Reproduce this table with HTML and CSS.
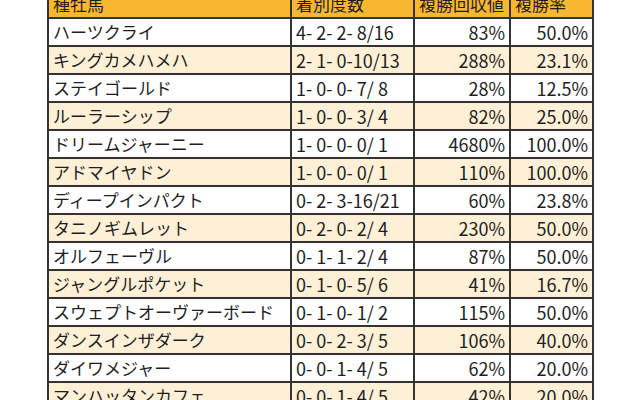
FILE: index.html
```html
<!DOCTYPE html>
<html lang="ja">
<head>
<meta charset="utf-8">
<link rel="stylesheet" href="styles.css">
</head>
<body>
<table class="stats">
  <colgroup>
    <col class="c-name"><col class="c-rec"><col class="c-ret"><col class="c-rate">
  </colgroup>
  <thead>
    <tr><th>種牡馬</th><th>着別度数</th><th>複勝回収値</th><th>複勝率</th></tr>
  </thead>
  <tbody>
    <tr><td>ハーツクライ</td><td class="rec">4- 2- 2- 8/16</td><td class="num">83%</td><td class="num">50.0%</td></tr>
    <tr><td>キングカメハメハ</td><td class="rec">2- 1- 0-10/13</td><td class="num">288%</td><td class="num">23.1%</td></tr>
    <tr><td>ステイゴールド</td><td class="rec">1- 0- 0- 7/ 8</td><td class="num">28%</td><td class="num">12.5%</td></tr>
    <tr><td>ルーラーシップ</td><td class="rec">1- 0- 0- 3/ 4</td><td class="num">82%</td><td class="num">25.0%</td></tr>
    <tr><td>ドリームジャーニー</td><td class="rec">1- 0- 0- 0/ 1</td><td class="num">4680%</td><td class="num">100.0%</td></tr>
    <tr><td>アドマイヤドン</td><td class="rec">1- 0- 0- 0/ 1</td><td class="num">110%</td><td class="num">100.0%</td></tr>
    <tr><td>ディープインパクト</td><td class="rec">0- 2- 3-16/21</td><td class="num">60%</td><td class="num">23.8%</td></tr>
    <tr><td>タニノギムレット</td><td class="rec">0- 2- 0- 2/ 4</td><td class="num">230%</td><td class="num">50.0%</td></tr>
    <tr><td>オルフェーヴル</td><td class="rec">0- 1- 1- 2/ 4</td><td class="num">87%</td><td class="num">50.0%</td></tr>
    <tr><td>ジャングルポケット</td><td class="rec">0- 1- 0- 5/ 6</td><td class="num">41%</td><td class="num">16.7%</td></tr>
    <tr><td>スウェプトオーヴァーボード</td><td class="rec">0- 1- 0- 1/ 2</td><td class="num">115%</td><td class="num">50.0%</td></tr>
    <tr><td>ダンスインザダーク</td><td class="rec">0- 0- 2- 3/ 5</td><td class="num">106%</td><td class="num">40.0%</td></tr>
    <tr><td>ダイワメジャー</td><td class="rec">0- 0- 1- 4/ 5</td><td class="num">62%</td><td class="num">20.0%</td></tr>
    <tr><td>マンハッタンカフェ</td><td class="rec">0- 0- 1- 4/ 5</td><td class="num">42%</td><td class="num">20.0%</td></tr>
  </tbody>
</table>
</body>
</html>
```
FILE: styles.css
```css
html, body {
  margin: 0;
  padding: 0;
  background: #ffffff;
}
body {
  font-family: "Noto Sans CJK JP", "Noto Sans", sans-serif;
  color: #1e1e1e;
  overflow: hidden;
  height: 400px;
}
.stats {
  border-collapse: collapse;
  table-layout: fixed;
  width: 545px;
  margin: -11px 0 0 47px;
  font-size: 17px;
}
.c-name { width: 243px; }
.c-rec { width: 123px; }
.c-ret { width: 96px; }
.c-rate { width: 83px; }
.stats th, .stats td {
  border: 2px solid #333333;
  height: 28px;
  box-sizing: border-box;
  padding: 0 4px 0 4px;
  line-height: 24px;
  text-align: left;
  font-weight: normal;
  white-space: pre;
  overflow: hidden;
}
.stats thead th {
  background: #f8b731;
}
.stats tbody tr:nth-child(even) td {
  background: #fdf0d6;
}
.stats td.rec,
.stats td.num {
  font-size: 18px;
}
.stats td.num {
  text-align: right;
}
```
